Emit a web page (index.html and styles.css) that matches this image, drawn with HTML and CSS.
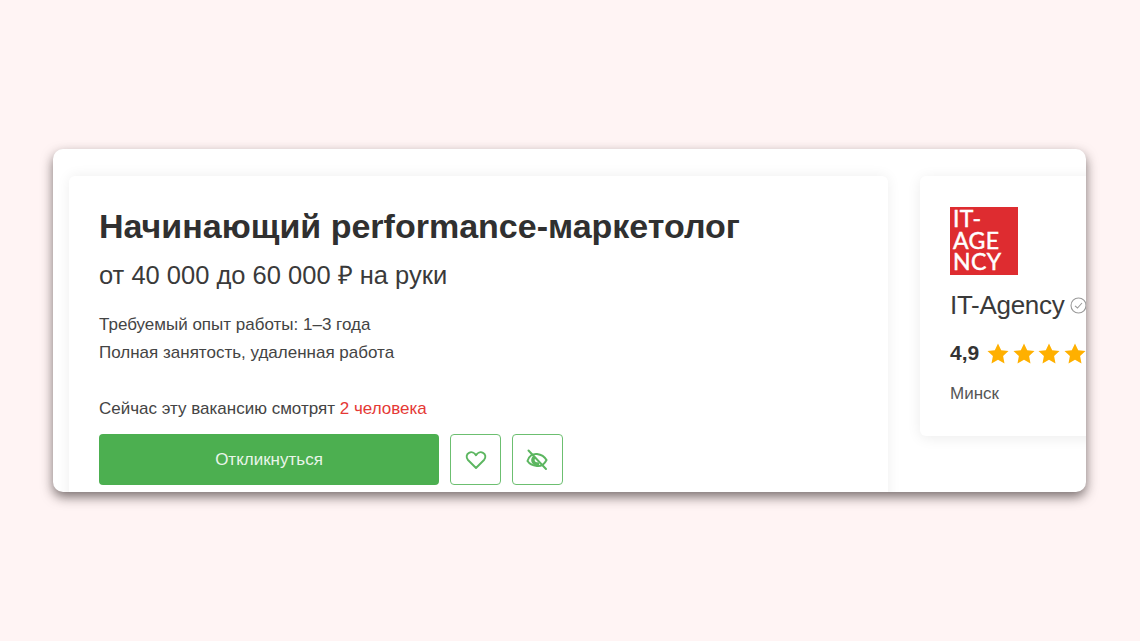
FILE: index.html
```html
<!DOCTYPE html>
<html lang="ru">
<head>
<meta charset="utf-8">
<title>Вакансия</title>
<link rel="stylesheet" href="styles.css">
</head>
<body>
<section class="panel">
  <article class="vacancy">
    <h1 class="title">Начинающий performance-маркетолог</h1>
    <p class="salary">от 40 000 до 60 000 ₽ на руки</p>
    <p class="line line-first">Требуемый опыт работы: 1–3 года</p>
    <p class="line">Полная занятость, удаленная работа</p>
    <p class="line line-watch">Сейчас эту вакансию смотрят <span class="hot">2 человека</span></p>
    <div class="actions">
      <button class="apply">Откликнуться</button>
      <button class="icon-btn icon-heart" aria-label="В избранное">
        <svg width="22" height="20" viewBox="0 0 22 20" fill="none" stroke="#5cb660" stroke-width="1.9" stroke-linejoin="round"><path d="M11 18 L3 10 C0.8 7.6 1.4 4 4 2.8 C6.6 1.6 9.6 2.6 11 5.2 C12.4 2.6 15.4 1.6 18 2.8 C20.6 4 21.2 7.6 19 10 Z"/></svg>
      </button>
      <button class="icon-btn icon-hide" aria-label="Скрыть">
        <svg width="24" height="22" viewBox="0 0 24 22" fill="none" stroke="#5cb660" stroke-width="2" stroke-linecap="round"><path d="M2.5 12 C4 7 8 4.500 12 5 C16 5.500 19.500 7.500 21.500 11 C19.500 15 16 17.500 12 17 C8 16.500 4.500 15 2.500 12 Z"/><path d="M8.500 9 A4 4 0 0 0 12.500 15" stroke-width="3.400"/><path d="M3.500 1.500 L21 20" stroke-width="2"/></svg>
      </button>
    </div>
  </article>
  <aside class="company">
    <div class="logo"><span>IT-</span><span>AGE</span><span>NCY</span></div>
    <div class="name-row">
      <span class="name">IT-Agency</span>
      <svg class="check" width="17" height="17" viewBox="0 0 17 17" fill="none" stroke="#9a9a9a" stroke-width="1.1"><circle cx="8.5" cy="8.5" r="7.5"/><path d="M5 8.8 L7.5 11 L12 6"/></svg>
    </div>
    <div class="rating">
      <span class="score">4,9</span>
      <svg class="star" width="22" height="21" viewBox="0 0 22 21"><path fill="#ffb000" d="M11 0.5 L14.2 7.2 L21.5 8.1 L16.1 13.1 L17.5 20.4 L11 16.8 L4.5 20.4 L5.9 13.1 L0.5 8.1 L7.8 7.2 Z"/></svg>
      <svg class="star" width="22" height="21" viewBox="0 0 22 21"><path fill="#ffb000" d="M11 0.5 L14.2 7.2 L21.5 8.1 L16.1 13.1 L17.5 20.4 L11 16.8 L4.5 20.4 L5.9 13.1 L0.5 8.1 L7.8 7.2 Z"/></svg>
      <svg class="star" width="22" height="21" viewBox="0 0 22 21"><path fill="#ffb000" d="M11 0.5 L14.2 7.2 L21.5 8.1 L16.1 13.1 L17.5 20.4 L11 16.8 L4.5 20.4 L5.9 13.1 L0.5 8.1 L7.8 7.2 Z"/></svg>
      <svg class="star" width="22" height="21" viewBox="0 0 22 21"><path fill="#ffb000" d="M11 0.5 L14.2 7.2 L21.5 8.1 L16.1 13.1 L17.5 20.4 L11 16.8 L4.5 20.4 L5.9 13.1 L0.5 8.1 L7.8 7.2 Z"/></svg>
      <svg class="star" width="22" height="21" viewBox="0 0 22 21"><path fill="#ffb000" d="M11 0.5 L14.2 7.2 L21.5 8.1 L16.1 13.1 L17.5 20.4 L11 16.8 L4.5 20.4 L5.9 13.1 L0.5 8.1 L7.8 7.2 Z"/></svg>
    </div>
    <div class="city">Минск</div>
  </aside>
</section>
</body>
</html>
```
FILE: styles.css
```css
* { box-sizing: border-box; }
html, body { margin: 0; height: 100%; }
body {
  background: #fff4f4;
  padding: 149px 54px 0 53px;
  font-family: "Liberation Sans", Arial, sans-serif;
  color: #333;
  overflow: hidden;
}
.panel {
  height: 343px;
  background: #fff;
  border-radius: 10px;
  box-shadow: 0 5px 12px rgba(50, 40, 40, 0.65);
  display: flex;
  align-items: flex-start;
  gap: 32px;
  padding: 27px 0 0 16px;
  overflow: hidden;
}
.vacancy {
  flex: 0 0 819px;
  height: 340px;
  padding: 30px;
  background: #fff;
  border-radius: 6px;
  box-shadow: 0 0 14px rgba(0, 0, 0, 0.07);
}
.title {
  margin: 0;
  font-size: 34px;
  line-height: 40px;
  font-weight: 700;
  color: #303030;
}
.salary {
  margin: 14px 0 0;
  font-size: 25.5px;
  line-height: 30px;
  color: #3a3a3a;
}
.line {
  margin: 0;
  font-size: 17px;
  line-height: 28px;
  color: #444;
}
.line-first { margin-top: 21px; }
.line-watch { margin-top: 28px; }
.hot { color: #e53935; }
.actions {
  display: flex;
  gap: 11.25px;
  margin-top: 11px;
}
.apply {
  width: 340px;
  height: 51px;
  border: 0;
  border-radius: 4px;
  background: #4caf50;
  color: #e8f5e9;
  font: 17px "Liberation Sans", Arial, sans-serif;
}
.icon-btn {
  width: 50.5px;
  height: 51px;
  padding: 0;
  border: 1px solid #6cbf70;
  border-radius: 4px;
  background: #fff;
  display: flex;
  align-items: center;
  justify-content: center;
}
.company {
  flex: 0 0 220px;
  height: 260px;
  padding: 31px 30px;
  background: #fff;
  border-radius: 6px;
  box-shadow: 0 2px 14px rgba(0, 0, 0, 0.08);
}
.logo {
  width: 68px;
  height: 68px;
  background: #de2c30;
  color: #fff;
  font: 400 23px/21.5px "Lato", sans-serif;
  -webkit-text-stroke: 0.5px #fff;
  letter-spacing: 0.4px;
  padding: 1px 3px;
  display: flex;
  flex-direction: column;
}
.name-row {
  display: flex;
  align-items: center;
  gap: 6px;
  margin-top: 14px;
  white-space: nowrap;
}
.name {
  font-size: 26px;
  line-height: 32px;
  color: #3a3a3a;
  letter-spacing: -0.3px;
}
.rating {
  display: flex;
  align-items: center;
  gap: 3.7px;
  margin-top: 20px;
}
.score {
  font-size: 21px;
  font-weight: 700;
  margin-right: 4px;
  color: #333;
}
.star { flex: none; }
.city {
  margin-top: 19px;
  font-size: 17px;
  line-height: 20px;
  color: #555;
}
```
